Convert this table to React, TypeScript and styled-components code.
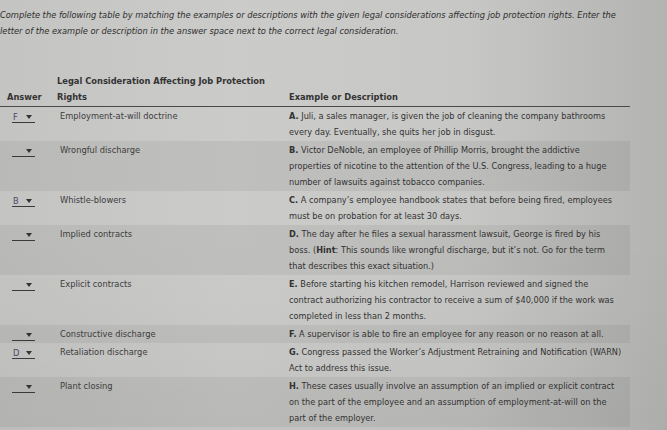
import React from "react";
import styled, { createGlobalStyle } from "styled-components";

const Global = createGlobalStyle`
  html, body { margin: 0; padding: 0; }
  body {
    width: 667px;
    height: 430px;
    overflow: hidden;
    font-family: "DejaVu Sans", Verdana, sans-serif;
    color: #363636;
    background:
      linear-gradient(180deg, rgba(0,0,0,0) 55%, rgba(0,0,0,0.035) 100%),
      linear-gradient(90deg, #c4c4c2 0%, #cbcbc9 35%, #c7c7c5 70%, #b3b3b1 100%);
  }
`;

const Page = styled.div`
  padding-top: 7px;
  width: 667px;
  height: 430px;
  box-sizing: border-box;
  overflow: hidden;
`;

const Intro = styled.div`
  font-style: italic;
  font-size: 8.3px;
  line-height: 16px;
  color: #2e2e2e;
  white-space: nowrap;
`;

const Table = styled.div`
  margin-top: 34px;
  width: 630px;
  display: flex;
  flex-direction: column;
`;

const HeaderRow = styled.div`
  display: grid;
  grid-template-columns: 57px 232px 1fr;
  align-items: end;
  border-bottom: 1px solid #4a4a4a;
  padding-bottom: 1px;
`;

const HeadCell = styled.div<{ $pad?: number }>`
  font-weight: bold;
  font-size: 8.3px;
  line-height: 16px;
  color: #333;
  padding-left: ${(p) => p.$pad ?? 0}px;
  white-space: nowrap;
`;

const Row = styled.div<{ $shaded?: boolean }>`
  display: grid;
  grid-template-columns: 60px 229px 1fr;
  align-items: start;
  padding: 1px 0;
  background: ${(p) => (p.$shaded ? "rgba(0,0,0,0.055)" : "transparent")};
`;

const AnswerCell = styled.div`
  padding-left: 12px;
  height: 16px;
  display: flex;
  align-items: center;
`;

const Select = styled.div`
  width: 23px;
  height: 10px;
  border-bottom: 1px solid #3a3a3a;
  display: flex;
  align-items: center;
  justify-content: space-between;
  box-sizing: border-box;
  padding: 0 3px 0 1px;
  margin-top: 3px;
  font-size: 8.3px;
  color: #4a4a66;
`;

const Caret = styled.span`
  width: 0;
  height: 0;
  border-left: 3.5px solid transparent;
  border-right: 3.5px solid transparent;
  border-top: 4px solid #333;
  margin-left: auto;
`;

const Term = styled.div`
  font-size: 8.3px;
  line-height: 16px;
  color: #3c3c3c;
  white-space: nowrap;
`;

const Desc = styled.div`
  font-size: 8.2px;
  line-height: 16px;
  color: #333;
  white-space: nowrap;
`;

const Line = styled.div``;

const B = styled.b`
  font-weight: bold;
`;

type Item = {
  answer: string;
  term: string;
  letter: string;
  lines: React.ReactNode[];
  shaded: boolean;
};

const items: Item[] = [
  {
    answer: "F",
    term: "Employment-at-will doctrine",
    letter: "A.",
    lines: [
      " Juli, a sales manager, is given the job of cleaning the company bathrooms",
      "every day. Eventually, she quits her job in disgust.",
    ],
    shaded: false,
  },
  {
    answer: "",
    term: "Wrongful discharge",
    letter: "B.",
    lines: [
      " Victor DeNoble, an employee of Phillip Morris, brought the addictive",
      "properties of nicotine to the attention of the U.S. Congress, leading to a huge",
      "number of lawsuits against tobacco companies.",
    ],
    shaded: true,
  },
  {
    answer: "B",
    term: "Whistle-blowers",
    letter: "C.",
    lines: [
      " A company’s employee handbook states that before being fired, employees",
      "must be on probation for at least 30 days.",
    ],
    shaded: false,
  },
  {
    answer: "",
    term: "Implied contracts",
    letter: "D.",
    lines: [
      " The day after he files a sexual harassment lawsuit, George is fired by his",
      <>
        boss. (<B>Hint</B>: This sounds like wrongful discharge, but it’s not. Go for the term
      </>,
      "that describes this exact situation.)",
    ],
    shaded: true,
  },
  {
    answer: "",
    term: "Explicit contracts",
    letter: "E.",
    lines: [
      " Before starting his kitchen remodel, Harrison reviewed and signed the",
      "contract authorizing his contractor to receive a sum of $40,000 if the work was",
      "completed in less than 2 months.",
    ],
    shaded: false,
  },
  {
    answer: "",
    term: "Constructive discharge",
    letter: "F.",
    lines: [" A supervisor is able to fire an employee for any reason or no reason at all."],
    shaded: true,
  },
  {
    answer: "D",
    term: "Retaliation discharge",
    letter: "G.",
    lines: [
      " Congress passed the Worker’s Adjustment Retraining and Notification (WARN)",
      "Act to address this issue.",
    ],
    shaded: false,
  },
  {
    answer: "",
    term: "Plant closing",
    letter: "H.",
    lines: [
      " These cases usually involve an assumption of an implied or explicit contract",
      "on the part of the employee and an assumption of employment-at-will on the",
      "part of the employer.",
    ],
    shaded: true,
  },
];

export default function App() {
  return (
    <Page>
      <Global />
      <Intro>
        <Line>
          Complete the following table by matching the examples or descriptions with the given legal considerations affecting job protection rights. Enter the
        </Line>
        <Line>letter of the example or description in the answer space next to the correct legal consideration.</Line>
      </Intro>
      <Table>
        <HeaderRow>
          <HeadCell $pad={7}>Answer</HeadCell>
          <HeadCell>
            <Line>Legal Consideration Affecting Job Protection</Line>
            <Line>Rights</Line>
          </HeadCell>
          <HeadCell>Example or Description</HeadCell>
        </HeaderRow>
        {items.map((it) => (
          <Row key={it.letter} $shaded={it.shaded}>
            <AnswerCell>
              <Select>
                <span>{it.answer}</span>
                <Caret />
              </Select>
            </AnswerCell>
            <Term>{it.term}</Term>
            <Desc>
              {it.lines.map((l, i) => (
                <Line key={i}>
                  {i === 0 && <B>{it.letter}</B>}
                  {l}
                </Line>
              ))}
            </Desc>
          </Row>
        ))}
      </Table>
    </Page>
  );
}
